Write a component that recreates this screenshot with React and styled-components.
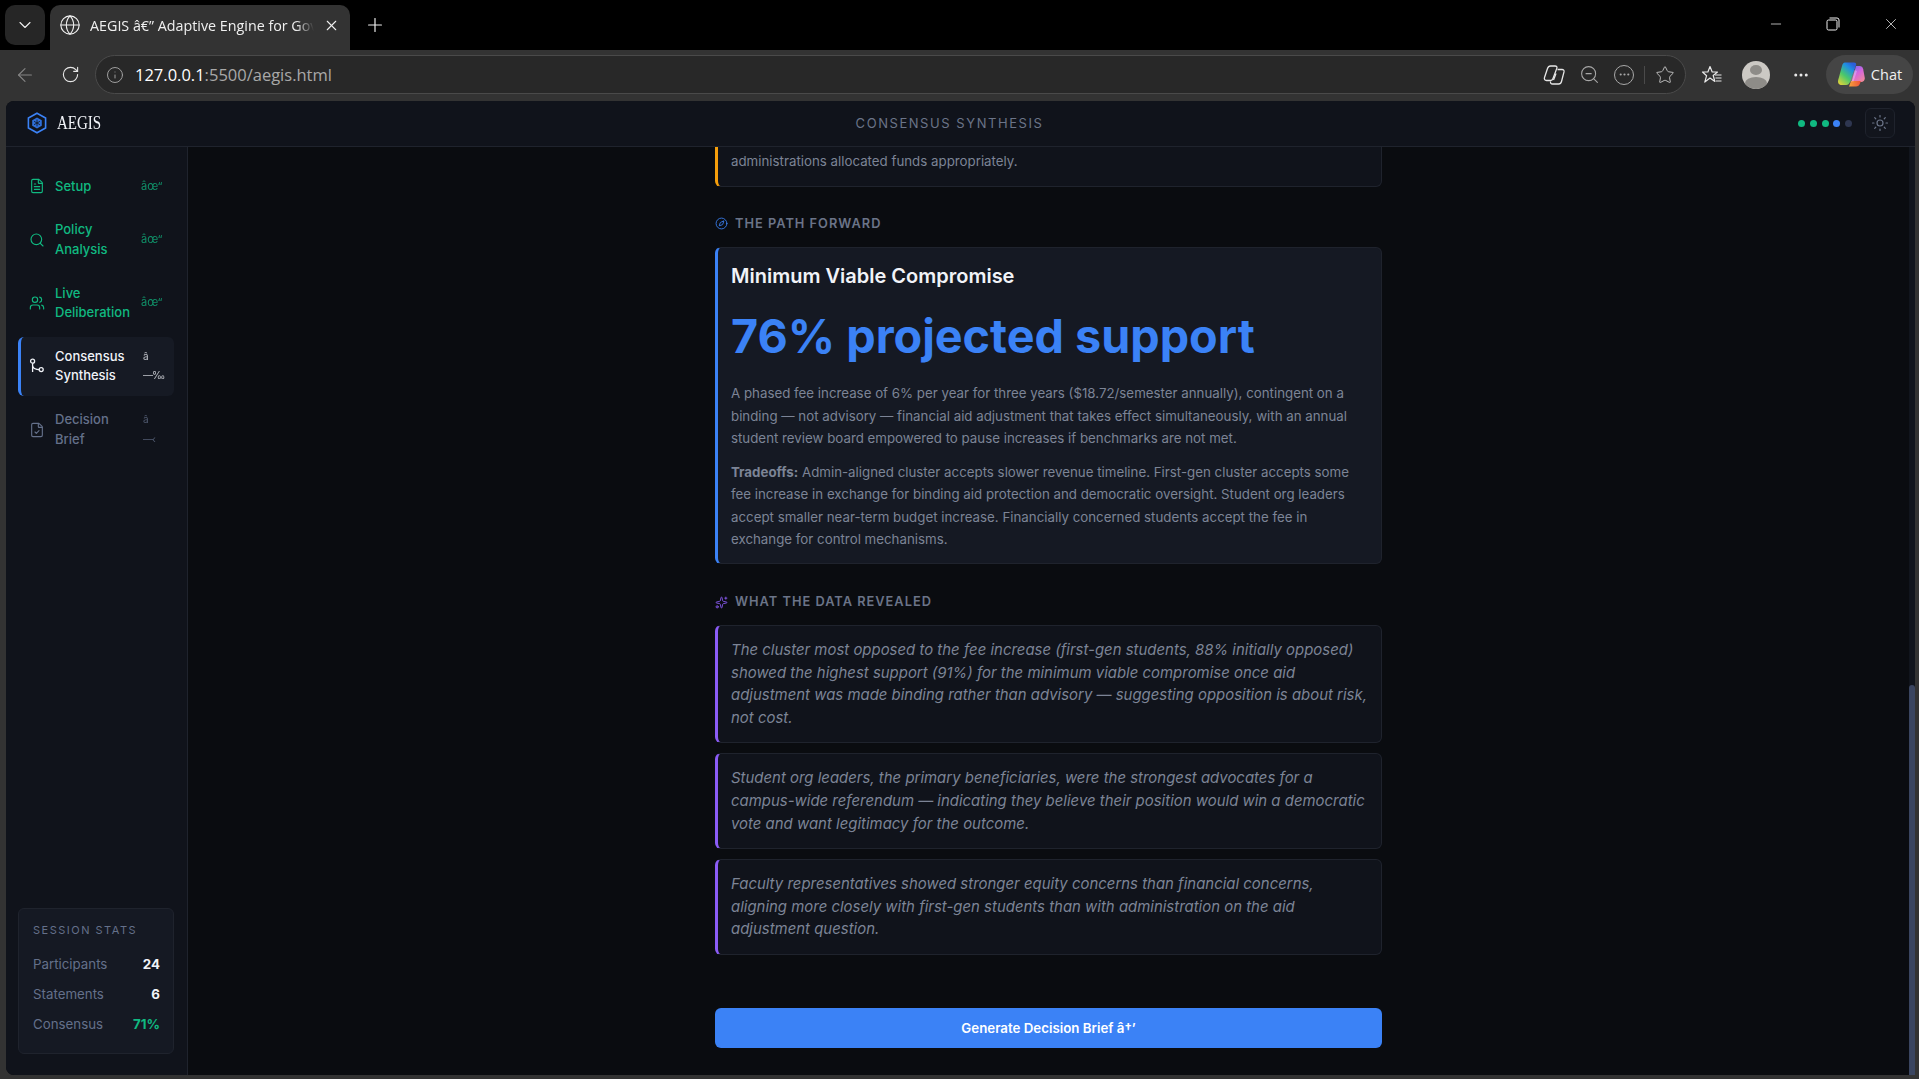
import React from 'react';
import styled, { createGlobalStyle } from 'styled-components';
import {
    ArrowLeft, ChevronDown, Compass, FileCheck, FileText, Globe, Info, Minus, MoreHorizontal,
    Plus, RotateCw, Search, Sparkles, Star, Sun, Users, X, ZoomOut,
} from 'lucide-react';

const GlobalStyle = createGlobalStyle`
    * { box-sizing: border-box; }
    html, body { margin: 0; padding: 0; height: 100%; background: #000; overflow: hidden; }
    #root { height: 100%; }
    p, h2, h3 { margin: 0; }
`;

const steps = [
    { label: 'Setup', icon: 'file', state: 'done', mark: 'âœ“' },
    { label: 'Policy Analysis', icon: 'search', state: 'done', mark: 'âœ“' },
    { label: 'Live Deliberation', icon: 'users', state: 'done', mark: 'âœ“' },
    { label: 'Consensus Synthesis', icon: 'route', state: 'active', mark: 'â\n—‰' },
    { label: 'Decision Brief', icon: 'check', state: 'pending', mark: 'â\n—‹' },
];

const insights = [
    'The cluster most opposed to the fee increase (first-gen students, 88% initially opposed) showed the highest support (91%) for the minimum viable compromise once aid adjustment was made binding rather than advisory — suggesting opposition is about risk, not cost.',
    'Student org leaders, the primary beneficiaries, were the strongest advocates for a campus-wide referendum — indicating they believe their position would win a democratic vote and want legitimacy for the outcome.',
    'Faculty representatives showed stronger equity concerns than financial concerns, aligning more closely with first-gen students than with administration on the aid adjustment question.',
];

const RouteIcon = () => (
    <svg width="16" height="16" viewBox="0 0 16 16" fill="none" stroke="currentColor" strokeWidth="1.3">
        <circle cx="3.6" cy="3.2" r="2" />
        <circle cx="12.2" cy="11.6" r="2" />
        <path d="M3.6 5.2V14M3.8 8.6c.8 2 3 3 6.4 3" />
    </svg>
);

const StepIcon = ({ name }) => {
    if (name === 'file') return <FileText size={16} strokeWidth={1.7} />;
    if (name === 'search') return <Search size={16} strokeWidth={1.7} />;
    if (name === 'users') return <Users size={16} strokeWidth={1.7} />;
    if (name === 'route') return <RouteIcon />;
    return <FileCheck size={16} strokeWidth={1.7} />;
};

const LogoMark = () => (
    <svg width="20" height="22" viewBox="0 0 20 22" fill="none">
        <path d="M10 1.2 18.6 6v10L10 20.8 1.4 16V6z" stroke="#3b82f6" strokeWidth="1.6" />
        <path d="M10 5.6 14.8 8.3v5.4L10 16.4l-4.8-2.7V8.3z" fill="#2f6fd8" />
        <path d="M10 7.6v6.8M7 9.3l6 3.4M13 9.3l-6 3.4" stroke="#10131b" strokeWidth=".8" />
    </svg>
);

const CopilotIcon = () => (
    <svg width="28" height="27" viewBox="0 0 28 27">
        <defs>
            <linearGradient id="cpA" x1="0" y1="1" x2=".7" y2="0">
                <stop offset="0" stopColor="#f7d534" />
                <stop offset=".45" stopColor="#4ac86a" />
                <stop offset=".8" stopColor="#1f8fe0" />
                <stop offset="1" stopColor="#2b5fd8" />
            </linearGradient>
            <linearGradient id="cpB" x1=".2" y1="0" x2=".8" y2="1">
                <stop offset="0" stopColor="#7a6cf0" />
                <stop offset=".45" stopColor="#d765dc" />
                <stop offset="1" stopColor="#f08a9a" />
            </linearGradient>
            <linearGradient id="cpC" x1="0" y1="0" x2="1" y2="0">
                <stop offset="0" stopColor="#f4a23a" />
                <stop offset="1" stopColor="#f0503a" />
            </linearGradient>
        </defs>
        <path d="M8 1.500h9c1.800 0 2.500 1.200 2 2.800L13 21c-.7 2-2 3-3.800 3H5c-3 0-4.500-2-3.800-5L5 5c.5-2.200 1.500-3.500 3-3.500z" fill="url(#cpA)" />
        <path d="M19 5h3.500c2 0 3.200 1.200 3.700 3.200l1.500 8c.5 3-1 4.800-3.700 4.800H14.500z" fill="url(#cpB)" />
        <path d="M12 25.500h7c2 0 3.300-1.200 4-3l.8-2.500H14z" fill="url(#cpC)" />
        <path d="M17.500 9 13 20.500h3.500L20 10z" fill="#ffffff" opacity=".3" />
    </svg>
);

const CopilotOutline = () => (
    <svg width="24" height="24" viewBox="0 0 24 24" fill="none" stroke="#e6e6e6" strokeWidth="1.3" strokeLinejoin="round">
        <path d="M8.500 3h4.500c1.700 0 2.300 1 1.800 2.400L11 15.500c-.5 1.400-1.300 2-2.500 2H4.500C2.800 17.500 2 16.200 2.500 14.500l3-9C6 4 7 3 8.500 3z" />
        <path d="M15.500 6.500h4.500c1.500 0 2.300 1 2 2.400l-2.500 9.600c-.4 1.500-1.300 2.500-2.800 2.500H10.500c-1.500 0-2.300-1-1.900-2.500" />
        <path d="M14 10.500 11.500 17" />
    </svg>
);

const RestoreIcon = () => (
    <svg width="14" height="14" viewBox="0 0 14 14" fill="none" stroke="currentColor" strokeWidth="1">
        <rect x="1" y="3" width="10" height="10" rx="1.500" />
        <path d="M3.500 1h7.500a2 2 0 0 1 2 2v7.500" />
    </svg>
);

const FavoritesIcon = () => (
    <svg width="22" height="22" viewBox="0 0 22 22" fill="none" stroke="#e8e8e8" strokeWidth="1.2" strokeLinejoin="round">
        <path d="M9 2.500 11.200 8h5.300l-4.300 3.500 1.700 6-4.900-3.400-5.200 4 1.800-6.400L1.500 8h5.400z" />
        <path d="M14 11h6.500M14.500 14h6M15 17h5.500" />
    </svg>
);

const App = () => {
    return (
        <>
            <GlobalStyle />
            <Browser>
                <TabStrip>
                    <TabMenu><ChevronDown size={20} strokeWidth={1.3} /></TabMenu>
                    <Tab>
                        <Globe size={22} strokeWidth={1.2} />
                        <TabTitle>AEGIS â€” Adaptive Engine for Governance</TabTitle>
                        <X size={17} strokeWidth={1.5} />
                    </Tab>
                    <NewTab><Plus size={22} strokeWidth={1.3} /></NewTab>
                    <WindowControls>
                        <Minus size={16} strokeWidth={1.1} />
                        <RestoreIcon />
                        <X size={18} strokeWidth={1} />
                    </WindowControls>
                </TabStrip>
                <Toolbar>
                    <ToolIcon $dim><ArrowLeft size={22} strokeWidth={1.2} /></ToolIcon>
                    <ToolIcon><RotateCw size={19} strokeWidth={1.4} /></ToolIcon>
                    <AddressBar>
                        <Info size={18} strokeWidth={1.3} color="#a0a0a0" />
                        <Url><b>127.0.0.1</b>:5500/aegis.html</Url>
                        <AddressIcons>
                            <CopilotOutline />
                            <ZoomOut size={21} strokeWidth={1.2} color="#a8a8a8" />
                            <Ellipsis><MoreHorizontal size={13} strokeWidth={2} /></Ellipsis>
                            <AddressDivider />
                            <Star size={20} strokeWidth={1.2} color="#bbb" />
                        </AddressIcons>
                    </AddressBar>
                    <ToolIcon><FavoritesIcon /></ToolIcon>
                    <Avatar><AvatarHead /><AvatarBody /></Avatar>
                    <ToolIcon><MoreHorizontal size={18} strokeWidth={2} /></ToolIcon>
                    <ChatPill><CopilotIcon />Chat</ChatPill>
                </Toolbar>
                <Page>
                    <TopBar>
                        <Brand><LogoMark /><BrandName>AEGIS</BrandName></Brand>
                        <TopTitle>CONSENSUS SYNTHESIS</TopTitle>
                        <TopRight>
                            <Dots>
                                <Dot $c="#10b981" /><Dot $c="#10b981" /><Dot $c="#10b981" /><Dot $c="#3b82f6" /><Dot $c="#2e3650" />
                            </Dots>
                            <ThemeButton><Sun size={18} strokeWidth={1.6} /></ThemeButton>
                        </TopRight>
                    </TopBar>
                    <Body>
                        <Sidebar>
                            <Steps>
                                {steps.map(({ label, icon, state, mark }) => (
                                    <Step key={label} $state={state}>
                                        <StepIcon name={icon} />
                                        <StepLabel>{label}</StepLabel>
                                        <StepMark $state={state}>{mark}</StepMark>
                                    </Step>
                                ))}
                            </Steps>
                            <Stats>
                                <StatsTitle>SESSION STATS</StatsTitle>
                                <StatRow><span>Participants</span><StatValue>24</StatValue></StatRow>
                                <StatRow><span>Statements</span><StatValue>6</StatValue></StatRow>
                                <StatRow><span>Consensus</span><StatValue $green>71%</StatValue></StatRow>
                            </Stats>
                        </Sidebar>
                        <Main>
                            <Column>
                                <NoteCard>
                                    Budget data on the fee is simply not shared in much detail, making it hard to tell if prior administrations allocated funds appropriately.
                                </NoteCard>
                                <SectionLabel><Compass size={13} strokeWidth={1.6} color="#3b82f6" />THE PATH FORWARD</SectionLabel>
                                <PathCard>
                                    <PathTitle>Minimum Viable Compromise</PathTitle>
                                    <Support>76% projected support</Support>
                                    <PathText>
                                        A phased fee increase of 6% per year for three years ($18.72/semester annually), contingent on a binding — not advisory — financial aid adjustment that takes effect simultaneously, with an annual student review board empowered to pause increases if benchmarks are not met.
                                    </PathText>
                                    <PathText>
                                        <b>Tradeoffs:</b> Admin-aligned cluster accepts slower revenue timeline. First-gen cluster accepts some fee increase in exchange for binding aid protection and democratic oversight. Student org leaders accept smaller near-term budget increase. Financially concerned students accept the fee in exchange for control mechanisms.
                                    </PathText>
                                </PathCard>
                                <SectionLabel><Sparkles size={13} strokeWidth={1.6} color="#8b5cf6" />WHAT THE DATA REVEALED</SectionLabel>
                                <Insights>
                                    {insights.map((text) => <Insight key={text}>{text}</Insight>)}
                                </Insights>
                                <GenerateButton>Generate Decision Brief â†’</GenerateButton>
                            </Column>
                            <ScrollTrack><ScrollThumb /></ScrollTrack>
                        </Main>
                    </Body>
                </Page>
            </Browser>
        </>
    );
}

export default App;

const Browser = styled.div`
    height: 100vh;
    display: flex;
    flex-direction: column;
    background: #333;
    font-family: "Open Sans", sans-serif;
`;

const TabStrip = styled.div`
    height: 50px;
    flex: none;
    background: #000;
    display: flex;
    align-items: flex-end;
    padding-left: 5px;
    color: #f0f0f0;
`;

const TabMenu = styled.div`
    width: 40px;
    height: 40px;
    margin-bottom: 5px;
    border-radius: 10px;
    background: #262626;
    display: flex;
    align-items: center;
    justify-content: center;
`;

const Tab = styled.div`
    width: 300px;
    height: 45px;
    margin-left: 5px;
    padding: 0 10px 5px 9px;
    border-radius: 10px 10px 0 0;
    background: #333;
    display: flex;
    align-items: center;
    gap: 9px;
`;

const TabTitle = styled.div`
    flex: 1;
    min-width: 0;
    font-size: 14.3px;
    white-space: nowrap;
    overflow: hidden;
    mask-image: linear-gradient(to right, #000 92%, transparent);
`;

const NewTab = styled.div`
    margin: 0 0 14px 14px;
    display: flex;
`;

const WindowControls = styled.div`
    margin: 0 0 17px auto;
    display: flex;
    align-items: center;
    gap: 42px;
    padding-right: 19px;
`;

const Toolbar = styled.div`
    height: 51px;
    flex: none;
    display: flex;
    align-items: center;
    padding: 0 5px 2px 9px;
    color: #e8e8e8;
`;

const ToolIcon = styled.div`
    width: 32px;
    display: flex;
    justify-content: center;
    margin-right: 13px;
    opacity: ${({ $dim }) => ($dim ? 0.45 : 1)};
`;

const AddressBar = styled.div`
    width: 1591px;
    height: 39px;
    margin: 0 10px 0 -4px;
    padding: 0 10px 0 10px;
    border: 1px solid #4a4a4a;
    border-radius: 20px;
    background: #282828;
    display: flex;
    align-items: center;
    gap: 11px;
`;

const Url = styled.div`
    font-size: 16.5px;
    color: #a8a8a8;

    b {
        font-weight: 400;
        color: #fff;
    }
`;

const AddressIcons = styled.div`
    margin-left: auto;
    display: flex;
    align-items: center;
    gap: 10px;

    & > :first-child {
        margin-right: 3px;
    }
`;

const Ellipsis = styled.div`
    width: 20px;
    height: 20px;
    margin-left: 4px;
    border: 1.2px solid #a8a8a8;
    border-radius: 50%;
    color: #a8a8a8;
    display: flex;
    align-items: center;
    justify-content: center;
`;

const AddressDivider = styled.div`
    width: 1px;
    height: 18px;
    background: #4a4a4a;
`;

const Avatar = styled.div`
    width: 28px;
    height: 28px;
    margin: 0 15px 0 1px;
    border-radius: 50%;
    background: #ccc9c4;
    overflow: hidden;
    display: flex;
    flex-direction: column;
    align-items: center;
    flex: none;
`;

const AvatarHead = styled.div`
    width: 12px;
    height: 12px;
    margin-top: 4px;
    border-radius: 50%;
    background: #8e8c88;
`;

const AvatarBody = styled.div`
    width: 22px;
    height: 14px;
    margin-top: 2px;
    border-radius: 50%;
    background: #8e8c88;
`;

const ChatPill = styled.div`
    width: 87px;
    height: 39px;
    flex: none;
    margin-left: -4px;
    border-radius: 20px;
    background: #454545;
    display: flex;
    align-items: center;
    justify-content: center;
    gap: 6px;
    font-size: 14.5px;
    color: #f0f0f0;
`;

const Page = styled.div`
    flex: 1;
    min-height: 0;
    margin: 0 4px 4px 6px;
    border-radius: 8px 8px 0 8px;
    overflow: hidden;
    background: #0a0c10;
    display: flex;
    flex-direction: column;
    font-family: Inter, sans-serif;
`;

const TopBar = styled.header`
    height: 46px;
    flex: none;
    padding: 0 20px 1px 21px;
    background: #10131b;
    border-bottom: 1px solid #1f232d;
    display: flex;
    align-items: center;
    justify-content: space-between;
    position: relative;
    z-index: 1;
`;

const Brand = styled.div`
    display: flex;
    align-items: center;
    gap: 10px;

    svg {
        flex: none;
    }
`;

const BrandName = styled.div`
    width: 44px;
    font-family: "Liberation Serif", serif;
    font-size: 19px;
    color: #f1f3f8;
    transform: scaleX(0.79);
    transform-origin: left center;
`;

const TopTitle = styled.div`
    font-size: 13px;
    letter-spacing: 1.56px;
    color: #6b7488;
`;

const TopRight = styled.div`
    display: flex;
    align-items: center;
    gap: 13px;
`;

const Dots = styled.div`
    display: flex;
    gap: 4.75px;
`;

const Dot = styled.span`
    width: 7px;
    height: 7px;
    border-radius: 50%;
    background: ${({ $c }) => $c};
`;

const ThemeButton = styled.div`
    width: 30px;
    height: 30px;
    border: 1px solid #1f232d;
    border-radius: 6px;
    background: #12151d;
    color: #6b7488;
    display: flex;
    align-items: center;
    justify-content: center;
`;

const Body = styled.div`
    flex: 1;
    min-height: 0;
    display: flex;
`;

const Sidebar = styled.aside`
    width: 182px;
    flex: none;
    padding: 19.5px 13px 21px 12px;
    background: #10131b;
    border-right: 1px solid #1f232d;
    display: flex;
    flex-direction: column;
    justify-content: space-between;
`;

const Steps = styled.nav`
    display: flex;
    flex-direction: column;
    gap: 4.25px;
`;

const stepColor = { done: '#10b981', active: '#f1f3f8', pending: '#64708a' };

const Step = styled.div`
    display: flex;
    align-items: center;
    gap: 10px;
    padding: 10px 10px 10px ${({ $state }) => ($state === 'active' ? '8px' : '11px')};
    border-radius: 6px;
    font-size: 13px;
    line-height: 19.5px;
    font-weight: 500;
    color: ${({ $state }) => stepColor[$state]};
    background: ${({ $state }) => ($state === 'active' ? '#161a24' : 'transparent')};
    border-left: ${({ $state }) => ($state === 'active' ? '3px solid #3b82f6' : 'none')};

    svg {
        flex: none;
    }
`;

const StepLabel = styled.div`
    flex: 1;
    min-width: 0;
`;

const StepMark = styled.div`
    width: 23px;
    flex: none;
    padding-left: ${({ $state }) => ($state === 'done' ? '0' : '2px')};
    font-size: ${({ $state }) => ($state === 'done' ? '11px' : '10px')};
    letter-spacing: ${({ $state }) => ($state === 'done' ? '0' : '-1px')};
    font-weight: 400;
    white-space: pre;
    opacity: 0.75;
`;

const Stats = styled.div`
    height: 146px;
    padding: 15px 13px 14px 14px;
    border: 1px solid #1f232d;
    border-radius: 6px;
    background: #151923;
`;

const StatsTitle = styled.div`
    font-size: 11px;
    line-height: 13px;
    letter-spacing: 1.5px;
    color: #64708a;
    margin-bottom: 12px;
`;

const StatRow = styled.div`
    height: 30px;
    display: flex;
    align-items: center;
    justify-content: space-between;
    font-size: 13.3px;
    color: #64708a;
`;

const StatValue = styled.span`
    font-weight: 700;
    color: ${({ $green }) => ($green ? '#10b981' : '#f1f3f8')};
`;

const Main = styled.main`
    flex: 1;
    min-width: 0;
    display: flex;
    overflow: hidden;
`;

const Column = styled.div`
    flex: 1;
    min-width: 0;
    padding-bottom: 27px;
    display: flex;
    flex-direction: column;
    align-items: center;
    justify-content: flex-end;

    & > * {
        width: 667px;
    }
`;

const ScrollTrack = styled.div`
    width: 6px;
    flex: none;
    display: flex;
    align-items: flex-end;
    background: #11151d;
`;

const ScrollThumb = styled.div`
    width: 100%;
    height: 390px;
    border-radius: 3px 3px 0 0;
    background: #3a4560;
`;

const NoteCard = styled.div`
    flex: none;
    padding: 14px 14px 13px 13px;
    border: 1px solid #1f232d;
    border-left: 3px solid #f59e0b;
    border-radius: 6px;
    background: #10131b;
    font-size: 13.3px;
    line-height: 22.6px;
    color: #7c8496;
`;

const SectionLabel = styled.h3`
    flex: none;
    margin: 28px 0 14px;
    display: flex;
    align-items: center;
    gap: 7px;
    font-size: 12.8px;
    line-height: 18px;
    font-weight: 600;
    letter-spacing: 1px;
    color: #6b7488;
`;

const PathCard = styled.section`
    flex: none;
    margin-bottom: 1px;
    padding: 14px 14px 12px 13px;
    border: 1px solid #1f232d;
    border-left: 3px solid #3b82f6;
    border-radius: 6px;
    background: #151923;
`;

const PathTitle = styled.h2`
    font-size: 20px;
    line-height: 28px;
    font-weight: 600;
    color: #f1f3f8;
`;

const Support = styled.div`
    margin: 18px 0 18px;
    font-size: 46.7px;
    line-height: 56px;
    font-weight: 700;
    color: #3b82f6;
`;

const PathText = styled.p`
    font-size: 13.3px;
    line-height: 22.6px;
    color: #7c8496;

    & + & {
        margin-top: 11px;
    }

    b {
        font-weight: 700;
    }
`;

const Insights = styled.div`
    flex: none;
    display: flex;
    flex-direction: column;
    gap: 10px;
`;

const Insight = styled.blockquote`
    margin: 0;
    padding: 13px 10px 13px 13px;
    border: 1px solid #1f232d;
    border-left: 3px solid #8b5cf6;
    border-radius: 6px;
    background: #10131b;
    font-size: 14.95px;
    line-height: 22.6px;
    font-style: italic;
    color: #7c8496;
`;

const GenerateButton = styled.button`
    flex: none;
    height: 40px;
    margin-top: 53px;
    border: 0;
    border-radius: 6px;
    background: #3b82f6;
    color: #fff;
    font-family: Inter, sans-serif;
    font-size: 13.3px;
    font-weight: 600;
`;
